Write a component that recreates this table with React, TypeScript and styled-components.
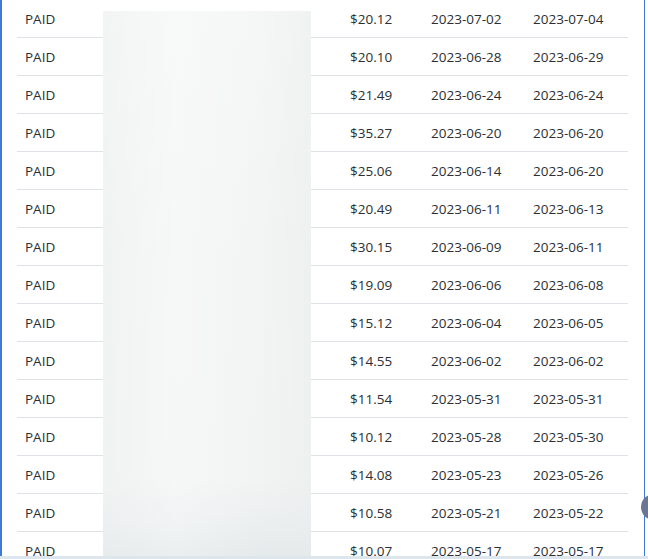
import React from "react";
import styled, { createGlobalStyle } from "styled-components";

interface Invoice {
  status: string;
  amount: string;
  issued: string;
  paid: string;
}

const invoices: Invoice[] = [
  { status: "PAID", amount: "$20.12", issued: "2023-07-02", paid: "2023-07-04" },
  { status: "PAID", amount: "$20.10", issued: "2023-06-28", paid: "2023-06-29" },
  { status: "PAID", amount: "$21.49", issued: "2023-06-24", paid: "2023-06-24" },
  { status: "PAID", amount: "$35.27", issued: "2023-06-20", paid: "2023-06-20" },
  { status: "PAID", amount: "$25.06", issued: "2023-06-14", paid: "2023-06-20" },
  { status: "PAID", amount: "$20.49", issued: "2023-06-11", paid: "2023-06-13" },
  { status: "PAID", amount: "$30.15", issued: "2023-06-09", paid: "2023-06-11" },
  { status: "PAID", amount: "$19.09", issued: "2023-06-06", paid: "2023-06-08" },
  { status: "PAID", amount: "$15.12", issued: "2023-06-04", paid: "2023-06-05" },
  { status: "PAID", amount: "$14.55", issued: "2023-06-02", paid: "2023-06-02" },
  { status: "PAID", amount: "$11.54", issued: "2023-05-31", paid: "2023-05-31" },
  { status: "PAID", amount: "$10.12", issued: "2023-05-28", paid: "2023-05-30" },
  { status: "PAID", amount: "$14.08", issued: "2023-05-23", paid: "2023-05-26" },
  { status: "PAID", amount: "$10.58", issued: "2023-05-21", paid: "2023-05-22" },
  { status: "PAID", amount: "$10.07", issued: "2023-05-17", paid: "2023-05-17" },
];

const App: React.FC = () => {
  return (
    <>
      <GlobalStyle />
      <StyledFrame>
        <StyledTable>
          <colgroup>
            <col style={{ width: 86 }} />
            <col style={{ width: 239 }} />
            <col style={{ width: 81 }} />
            <col style={{ width: 102 }} />
            <col style={{ width: 103 }} />
          </colgroup>
          <tbody>
            {invoices.map((item, index) => (
              <StyledRow key={index}>
                <StyledCell>{item.status}</StyledCell>
                <StyledCell />
                <StyledCell>{item.amount}</StyledCell>
                <StyledCell>{item.issued}</StyledCell>
                <StyledCell>{item.paid}</StyledCell>
              </StyledRow>
            ))}
          </tbody>
        </StyledTable>
        <StyledRedaction />
      </StyledFrame>
      <StyledScrollKnob />
      <StyledBottomBar />
    </>
  );
};

export default App;

const GlobalStyle = createGlobalStyle`
  html, body {
    margin: 0;
    padding: 0;
    background: #ffffff;
    overflow: hidden;
  }
  body {
    font-family: "Open Sans", "Noto Sans", sans-serif;
    color: #2b2f33;
  }
`;

const StyledFrame = styled.div`
  position: relative;
  box-sizing: border-box;
  width: 645px;
  height: 556px;
  border-left: 2px solid #3f7bd6;
  border-right: 1px solid #3f7bd6;
  padding-left: 15px;
  overflow: hidden;
`;

const StyledTable = styled.table`
  border-collapse: collapse;
  table-layout: fixed;
  width: 611px;
  margin-top: -1px;
`;

const StyledRow = styled.tr`
  height: 38px;
  border-bottom: 1px solid #dee2e6;
`;

const StyledCell = styled.td`
  padding: 2px 8px 0;
  font-size: 13.5px;
  line-height: 20px;
  white-space: nowrap;
  vertical-align: middle;
`;

const StyledRedaction = styled.div`
  position: absolute;
  left: 101px;
  top: 11px;
  width: 208px;
  bottom: 0;
  background:
    linear-gradient(
      to right,
      rgba(240, 241, 241, 0.6) 0%,
      rgba(250, 250, 250, 0.5) 35%,
      rgba(242, 243, 243, 0.4) 75%,
      rgba(236, 238, 238, 0.6) 100%
    ),
    linear-gradient(
      to bottom,
      #f7f8f8 0%,
      #f3f4f4 45%,
      #f2f3f3 86%,
      #e6ebed 95%,
      #dce3e6 100%
    );
`;

const StyledScrollKnob = styled.div`
  position: absolute;
  left: 641px;
  top: 494px;
  width: 26px;
  height: 26px;
  border-radius: 50%;
  background: #6b7694;
`;

const StyledBottomBar = styled.div`
  height: 3px;
  background: #dce6ec;
`;
